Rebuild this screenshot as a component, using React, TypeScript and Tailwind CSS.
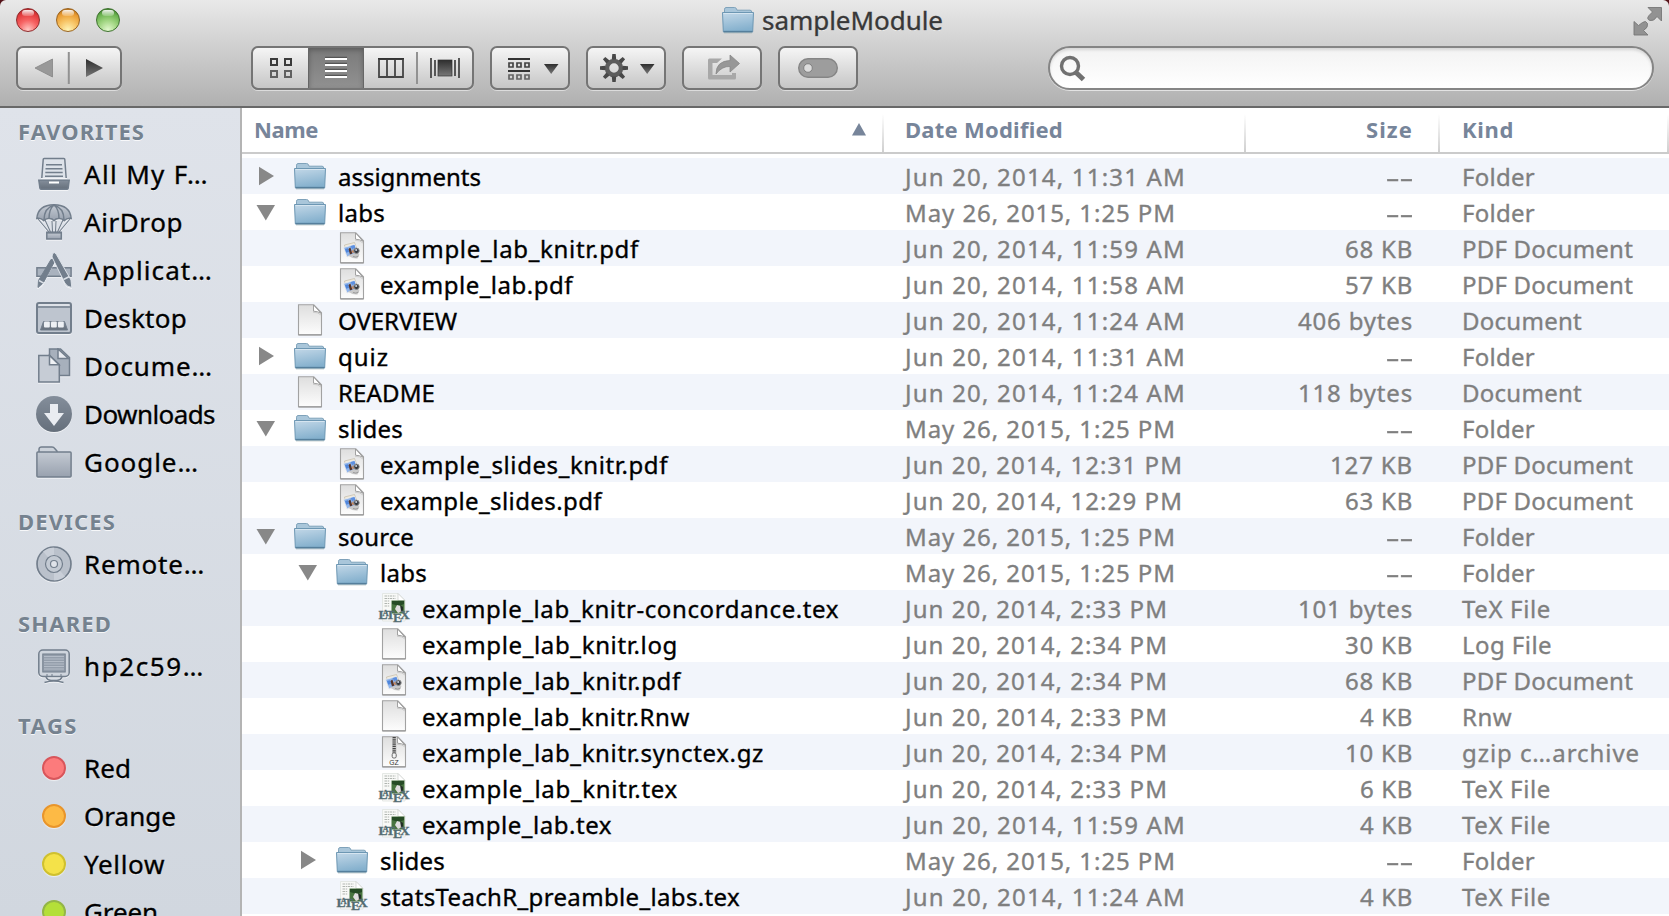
import { useLayoutEffect, useRef, useState } from "react";
import type { ReactNode } from "react";

/* Text whose letter spacing is adjusted so that it spans `w` pixels. */
function Fit({ text, w, className = "" }: { text: string; w: number; className?: string }) {
  const ref = useRef<HTMLSpanElement>(null);
  const [spacing, setSpacing] = useState(0);
  useLayoutEffect(() => {
    const el = ref.current;
    if (!el) return;
    el.style.letterSpacing = "0px";
    const natural = el.getBoundingClientRect().width;
    setSpacing((w - natural) / text.length);
  }, [text, w]);
  return (
    <span ref={ref} className={`inline-block shrink-0 whitespace-nowrap ${className}`} style={{ letterSpacing: `${spacing}px` }}>
      {text}
    </span>
  );
}

type Kind = "folder" | "doc" | "pdf" | "gz" | "tex";
type Row = { name: string; w: number; depth: 0 | 1 | 2; icon: Kind; open?: boolean; date: string; dw: number; size: string; sw: number; kind: string; kw: number };

const AM = 281;
const PM = 263;
const MAY = 271;
const MAY_DATE = "May 26, 2015, 1:25 PM";

const folder = (name: string, w: number, depth: 0 | 1, open: boolean, date = MAY_DATE, dw = MAY): Row => ({
  name, w, depth, icon: "folder", open, date, dw, size: "--", sw: 27, kind: "Folder", kw: 73,
});
const pdf = (name: string, w: number, depth: 1 | 2, time: string, dw: number, size: string, sw: number): Row => ({
  name, w, depth, icon: "pdf", date: `Jun 20, 2014, ${time}`, dw, size, sw, kind: "PDF Document", kw: 171,
});
const file = (name: string, w: number, depth: 0 | 1 | 2, icon: Kind, time: string, dw: number, size: string, sw: number, kind: string, kw: number): Row => ({
  name, w, depth, icon, date: `Jun 20, 2014, ${time}`, dw, size, sw, kind, kw,
});

const rows: Row[] = [
  folder("assignments", 143, 0, false, "Jun 20, 2014, 11:31 AM", AM),
  folder("labs", 47, 0, true),
  pdf("example_lab_knitr.pdf", 259, 1, "11:59 AM", AM, "68 KB", 68),
  pdf("example_lab.pdf", 193, 1, "11:58 AM", AM, "57 KB", 68),
  file("OVERVIEW", 119, 0, "doc", "11:24 AM", AM, "406 bytes", 115, "Document", 120),
  folder("quiz", 51, 0, false, "Jun 20, 2014, 11:31 AM", AM),
  file("README", 97, 0, "doc", "11:24 AM", AM, "118 bytes", 115, "Document", 120),
  folder("slides", 65, 0, true),
  pdf("example_slides_knitr.pdf", 288, 1, "12:31 PM", 278, "127 KB", 83),
  pdf("example_slides.pdf", 222, 1, "12:29 PM", 278, "63 KB", 68),
  folder("source", 76, 0, true),
  folder("labs", 47, 1, true),
  file("example_lab_knitr-concordance.tex", 417, 2, "tex", "2:33 PM", PM, "101 bytes", 115, "TeX File", 89),
  file("example_lab_knitr.log", 256, 2, "doc", "2:34 PM", PM, "30 KB", 68, "Log File", 90),
  pdf("example_lab_knitr.pdf", 259, 2, "2:34 PM", PM, "68 KB", 68),
  file("example_lab_knitr.Rnw", 268, 2, "doc", "2:33 PM", PM, "4 KB", 53, "Rnw", 50),
  file("example_lab_knitr.synctex.gz", 342, 2, "gz", "2:34 PM", PM, "10 KB", 68, "gzip c…archive", 178),
  file("example_lab_knitr.tex", 256, 2, "tex", "2:33 PM", PM, "6 KB", 53, "TeX File", 89),
  file("example_lab.tex", 190, 2, "tex", "11:59 AM", AM, "4 KB", 53, "TeX File", 89),
  folder("slides", 65, 1, false),
  file("statsTeachR_preamble_labs.tex", 360, 1, "tex", "11:24 AM", AM, "4 KB", 53, "TeX File", 89),
];

function Defs() {
  return (
    <svg width="0" height="0" className="absolute">
      <defs>
        <linearGradient id="fold" x1="0" y1="0" x2="0.25" y2="1"><stop offset="0" stopColor="#c3d8e8" /><stop offset="1" stopColor="#84b0cd" /></linearGradient>
        <linearGradient id="page" x1="0" y1="0" x2="0" y2="1"><stop offset="0" stopColor="#dedede" /><stop offset="1" stopColor="#fdfdfd" /></linearGradient>
        <linearGradient id="dark" x1="0" y1="0" x2="0" y2="1"><stop offset="0" stopColor="#2e2e2e" /><stop offset="1" stopColor="#777" /></linearGradient>
        <linearGradient id="side" x1="0" y1="0" x2="0" y2="1"><stop offset="0" stopColor="#c4cad3" /><stop offset="1" stopColor="#98a1ae" /></linearGradient>
        <linearGradient id="sideDark" x1="0" y1="0" x2="0" y2="1"><stop offset="0" stopColor="#848e9b" /><stop offset="1" stopColor="#656f7b" /></linearGradient>
      </defs>
    </svg>
  );
}

function FolderIcon() {
  return (
    <svg width="32" height="32" viewBox="0 0 32 32" className="shrink-0">
      <path d="M2.5 9V5.2Q2.5 3.8 4 3.5h8.5q1.5 0 2 1.4l.5 1.3h13q1.7 0 1.7 1.8v2z" fill="#a9c6da" stroke="#7fa2ba" />
      <path d="M.5 8.5h31l-.8 19q0 .5-.6.5H2q-.7 0-.7-.6z" fill="url(#fold)" stroke="#6d97b3" />
      <path d="M1.5 9.5h29" stroke="#d6e5f0" />
      <path d="M1.5 27.6h29" stroke="#557f9c" strokeWidth="1.5" />
      <path d="M2 29h28" stroke="#9aa" strokeOpacity=".5" />
    </svg>
  );
}

function Page({ children }: { children?: ReactNode }) {
  return (
    <svg width="32" height="32" viewBox="0 0 32 32" className="shrink-0">
      <path d="M4.5.8h15.3l7.7 7.900v22.100h-23z" fill="url(#page)" stroke="#a2a2a2" strokeWidth="1.100" />
      <path d="M4.5 31h23" stroke="#8d8d8d" />
      {children}
      <path d="M19.500 1v6.200q4.500 .2 7.500 2z" fill="#fff" stroke="#999" strokeWidth=".9" />
      <path d="M19 8.200q5 0 8 2.800" stroke="#bbb" strokeOpacity=".6" fill="none" />
    </svg>
  );
}

function RowIcon({ kind }: { kind: Kind }) {
  if (kind === "folder") return <FolderIcon />;
  if (kind === "doc") return <Page />;
  if (kind === "pdf")
    return (
      <Page>
        <path d="M8.500 13l10-2.500 3 8-11.500 3z" fill="#efeadd" stroke="#c4bba9" strokeWidth=".7" />
        <path d="M7.500 15.500l11-3 3.500 8.500-11 4z" fill="#8fb4ea" stroke="#eee" strokeWidth=".8" />
        <path d="M9 17l3-.8 1 3.500-2.700 1z" fill="#4f86dc" />
        <path d="M14.500 14l4-1 1 3-3.500 1z" fill="#5d8fe0" />
        <path d="M12.500 17l1.800-1.500 2.200 6-2.500 1z" fill="#53342b" />
        <path d="M15.500 20l1.500-3 1.500 4.500z" fill="#d08a5c" />
        <path d="M12 23.500l9-3 2.500 1.500-2 4.500q-5 .5-9.500-3z" fill="#c9c9c9" />
        <circle cx="20.500" cy="18.800" r="2.700" fill="#33373f" stroke="#8d8d8d" />
        <circle cx="20.200" cy="18" r="1.100" fill="#c7d0df" />
        <path d="M17 24.500q3 1.500 5.500-.5" stroke="#999" fill="none" />
      </Page>
    );
  if (kind === "gz")
    return (
      <Page>
        <rect x="14" y="1" width="4.500" height="16" fill="#c9c9c9" />
        <path d="M16.200 1v16" stroke="#444" strokeWidth="3.200" strokeDasharray="1.200 1" />
        <rect x="14.200" y="17" width="4" height="5" rx="1.500" fill="#f3f3f3" stroke="#666" />
        <text x="16" y="29.300" textAnchor="middle" fontSize="6.800" fontFamily="Liberation Sans, sans-serif" fill="#333">GZ</text>
      </Page>
    );
  return (
    <svg width="32" height="32" viewBox="0 0 32 32" className="shrink-0 overflow-visible">
      <path d="M4.500 1.500H20l7 7V29h-22.500z" fill="#f8f9f7" stroke="#e0e3e0" strokeWidth=".8" />
      <path d="M20 1.500V8.500h7z" fill="#fff" stroke="#c8ccc8" strokeWidth=".7" />
      <path d="M6.500 4h11M6.500 6.500h11M6.500 9h5M6.500 11.500h5M6.500 14h5" stroke="#b0b5b0" strokeWidth="1" strokeDasharray="2.500 .7 1.500 .6" />
      <rect x="13.500" y="8.500" width="13" height="13" fill="#48743f" />
      <path d="M14 9h12v3l-5 2-7-2z" fill="#264b25" />
      <path d="M17 17l2-4 4 1 2 5-5 2z" fill="#e1dee0" />
      <path d="M22 13l3 2v5l-2-1z" fill="#222f26" />
      <text fontFamily="Liberation Serif, serif" fontWeight="bold" fontSize="13.500" fill="#536c72" stroke="#536c72" strokeWidth=".3">
        <tspan x="0.500" y="27">L</tspan>
        <tspan x="4.500" y="23.500" fontSize="8.500">A</tspan>
        <tspan x="8" y="27">T</tspan>
        <tspan x="15" y="29.500">E</tspan>
        <tspan x="22" y="27">X</tspan>
      </text>
    </svg>
  );
}

const indent = ["pl-[13px]", "pl-[55px]", "pl-[97px]"];

function FileRow({ r, i }: { r: Row; i: number }) {
  return (
    <div className={`flex h-9 shrink-0 items-center ${i % 2 ? "bg-white" : "bg-[#f2f5fb]"}`}>
      <div className={`flex w-[663px] shrink-0 items-center ${indent[r.depth]}`}>
        <div className="flex w-[39px] shrink-0 items-center">
          {r.icon === "folder" &&
            (r.open ? (
              <svg width="20" height="20" className="shrink-0"><path d="M1.500 3h18.500l-9.200 15.500z" fill="#888" /></svg>
            ) : (
              <svg width="20" height="20" className="shrink-0"><path d="M4 .8v18.500L19 10z" fill="#888" /></svg>
            ))}
        </div>
        <RowIcon kind={r.icon} />
        <Fit text={r.name} w={r.w} className="ml-3 pt-px text-black" />
      </div>
      <Fit text={r.date} w={r.dw} className="pt-px text-[#7f7f7f]" />
      <div className="ml-auto flex w-[226px] shrink-0 justify-end pt-px text-[#7f7f7f]">
        {r.size === "--" ? <span className="origin-right scale-x-[1.8]">--</span> : <Fit text={r.size} w={r.sw} />}
      </div>
      <div className="ml-12 w-[208px] shrink-0 pt-px pl-px text-[#7f7f7f]">
        <Fit text={r.kind} w={r.kw} />
      </div>
    </div>
  );
}

const S = "#727e8c";

function SideSvg({ children }: { children: ReactNode }) {
  return (
    <svg width="36" height="36" viewBox="0 0 36 36" className="shrink-0 drop-shadow-[0_1px_0_rgba(255,255,255,0.6)]" fill="none" stroke={S} strokeWidth="1.500">
      {children}
    </svg>
  );
}

const icons: Record<string, ReactNode> = {
  files: (
    <SideSvg>
      <path d="M5.800 22L7.200 3.500q0-.9 1-.9h19.600q1 0 1 .9L30.200 22" fill="#dde2e9" />
      <path d="M10 8.800h16M9.500 12.800h17M9.300 16.500h17.400M9 20.300h18" />
      <path d="M2.800 24.200h30.400l-1 8q-.1 1-1 1H5q-1 0-1.100-1z" fill="url(#sideDark)" />
      <path d="M13 26.500h10" stroke="#fff" strokeWidth="2" />
    </SideSvg>
  ),
  airdrop: (
    <SideSvg>
      <path d="M2 15L13 28M9 16l5.500 12M27 16l-5.500 12M34 15L23 28M16 17l.5 11M20 17l-.5 11" strokeWidth="1.100" />
      <path d="M.8 14.500Q2 1 18 .8q16 .2 17.200 13.700-4-.8-7 2.200-2.200-2.600-5.200-2.200-3-.2-5 2.200-2-2.400-5-2.200-3-.4-5.200 2.200-3-3-7-2.200z" fill="url(#side)" />
      <path d="M8 16Q8 4 18 1Q28 4 28 16M13 14.500Q13 5 18 1Q23 5 23 14.500" />
      <rect x="10.800" y="28.500" width="14.500" height="6.500" fill="url(#side)" />
      <path d="M10.500 28.500h15" strokeWidth="2" />
    </SideSvg>
  ),
  apps: (
    <SideSvg>
      <rect x=".9" y="15.800" width="34.200" height="8.500" fill="#a9b2be" />
      <path d="M18 0l4 5-16 29-5 2 1-6L15 7z" fill="#dce1e8" stroke="none" />
      <path d="M15 7.500q2-1 3.500 2L7.500 30.500l-5.500 5 .5-7z" fill={S} strokeWidth="1" />
      <path d="M3 28.500l5 2.800" stroke="#dce1e8" />
      <path d="M16.500 1.500q2.200-2 3.800.8L35 28l.8 7.500q-5-.5-7-4.500L16 5z" fill={S} stroke="#dce1e8" strokeWidth="1" />
      <path d="M27.500 27.500l6-3" stroke="#dce1e8" />
    </SideSvg>
  ),
  desktop: (
    <SideSvg>
      <rect x="1" y="3" width="34" height="30" rx="2" fill="#bec5cf" strokeWidth="2" />
      <path d="M2 7h32" /><path d="M2.500 5h31" stroke="#e8ebf0" />
      <path d="M7.500 21.500h21l3 8.500H4.500z" fill="url(#sideDark)" strokeWidth="1" />
      <g fill="#edf0f4" stroke="none"><rect x="8" y="21.500" width="5.800" height="6" rx="1" /><rect x="15" y="21.500" width="5.800" height="6" rx="1" /><rect x="22" y="21.500" width="5.800" height="6" rx="1" /></g>
    </SideSvg>
  ),
  docs: (
    <SideSvg>
      <path d="M13.500 1h11l9 8.500V27.500H13.500z" fill="#a7b0bc" />
      <path d="M22 1v9.500h10.500z" fill="#e8ebf0" />
      <path d="M2.800 7.500h11l9.500 9V34H2.800z" fill="#c6ccd5" />
      <path d="M13.500 7.500v9.300h9.500z" fill="#f0f2f5" />
    </SideSvg>
  ),
  downloads: (
    <SideSvg>
      <circle cx="18" cy="18" r="18" fill="url(#sideDark)" stroke="none" />
      <path d="M14 8h8v9h6l-10 13L8 17h6z" fill="#e9ecf1" stroke="none" />
    </SideSvg>
  ),
  folder: (
    <SideSvg>
      <path d="M3 8V5q.3-2 2.500-2h10.500q1.800 0 3 1.800l2.500 3" fill="#ccd2da" />
      <rect x=".9" y="8" width="34.200" height="25" rx="1" fill="url(#side)" />
    </SideSvg>
  ),
  disc: (
    <SideSvg>
      <circle cx="18" cy="18" r="17" fill="#bac1cb" strokeWidth="1.700" />
      <path d="M18 18L7 5.500Q13 1 18 1.800zM18 18l11 12.500Q23 35 18 34.200z" fill="#c9cfd8" stroke="none" />
      <circle cx="18" cy="18" r="8.500" fill="#c3cad3" strokeWidth="1.200" />
      <circle cx="18" cy="18" r="3.500" fill="#dfe3e9" strokeWidth="1.200" />
    </SideSvg>
  ),
  display: (
    <SideSvg>
      <rect x="2.800" y="2" width="30.400" height="26.500" rx="4" fill="#cfd5dd" />
      <rect x="6.800" y="6" width="22.400" height="18" fill="#949eab" strokeWidth="1" />
      <path d="M8 8.500h20M8 11h20M8 13.500h20M8 16h20M8 18.500h20M8 21h20" stroke="#b4bcc7" strokeWidth="1" />
      <path d="M11 26v2M16 26v2M25 26v2" strokeWidth="1" />
      <path d="M10 29q1 3 5 3.500h6q4-.5 5-3.500M8.500 34.500q9-3 19 0" />
    </SideSvg>
  ),
};

function Heading({ text, w, first }: { text: string; w: number; first?: boolean }) {
  return (
    <div className={`flex shrink-0 items-end pl-[18px] pb-[3px] text-[22px] leading-[32px] font-bold text-[#75828f] [text-shadow:0_1px_0_rgba(255,255,255,0.8)] ${first ? "h-[42px]" : "h-[54px]"}`}>
      <Fit text={text} w={w} />
    </div>
  );
}

function Item({ icon, text, w }: { icon: ReactNode; text: string; w: number }) {
  return (
    <div className="flex h-12 shrink-0 items-center pl-9 text-[26px] leading-[48px] text-black [-webkit-text-stroke:0.35px_currentColor] [text-shadow:0_1px_0_rgba(255,255,255,0.8)]">
      {icon}
      <Fit text={text} w={w} className="ml-3" />
    </div>
  );
}

function Tag({ tone }: { tone: string }) {
  return (
    <div className="flex w-9 shrink-0 justify-center">
      <div className={`size-6 rounded-full border-2 shadow-[0_1px_1px_rgba(255,255,255,0.6)] ${tone}`} />
    </div>
  );
}

function Light({ tone }: { tone: string }) {
  return (
    <div className={`relative size-6 overflow-hidden rounded-full border ${tone}`}>
      <div className="absolute top-px left-[5px] h-[6px] w-3 rounded-full bg-linear-to-b from-white/90 to-white/20" />
    </div>
  );
}

const btn =
  "flex h-11 shrink-0 items-center overflow-hidden rounded-[7px] border-2 border-[#757575] bg-linear-to-b from-[#f5f5f5] to-[#c6c6c6] shadow-[0_1px_0_rgba(255,255,255,0.5)]";

function Toolbar() {
  return (
    <div className="flex h-11 items-center pr-[15px] pl-4">
      <div className={`${btn} w-[106px]`}>
        <svg width="102" height="40">
          <path d="M34.500 11v18L17 20z" fill="#999" stroke="#858585" strokeWidth=".8" />
          <path d="M50.800 4v32" stroke="#929292" strokeWidth="2" />
          <path d="M68 11v18l17-9z" fill="url(#dark)" />
        </svg>
      </div>
      <div className={`${btn} ml-[129px] w-[223px]`}>
        <div className="flex h-10 w-[55px] shrink-0 items-center justify-center">
          <svg width="24" height="22" fill="none" strokeWidth="2">
            <rect x="2" y="2" width="6" height="6" stroke="#3b3b3b" /><rect x="16" y="2" width="6" height="6" stroke="#3b3b3b" />
            <rect x="2" y="14" width="6" height="6" stroke="#616161" /><rect x="16" y="14" width="6" height="6" stroke="#616161" />
          </svg>
        </div>
        <div className="flex h-10 w-14 shrink-0 items-center justify-center border-x border-[#666] bg-linear-to-b from-[#7a7a7a] to-[#919191] shadow-[inset_0_2px_5px_rgba(0,0,0,0.25)]">
          <svg width="24" height="24">
            <path d="M1 3.500h22M1 9.500h22M1 15.500h22M1 21.500h22" stroke="#555" strokeWidth="1.500" transform="translate(0,-2)" />
            <path d="M1 3h22M1 9h22M1 15h22M1 21h22" stroke="#fff" strokeWidth="2" />
          </svg>
        </div>
        <svg width="108" height="40" className="shrink-0">
          <path d="M15 11h24v18H15zM23 11v18M31 11v18" fill="none" stroke="#444" strokeWidth="1.800" />
          <path d="M14 10.800h26" stroke="#333" strokeWidth="1.500" />
          <path d="M53 4v32" stroke="#929292" strokeWidth="2" />
          <path d="M67 10v20M71 12v16M91 12v16M95 10v20" stroke="#484848" strokeWidth="1.800" />
          <rect x="74" y="12" width="14" height="16" fill="url(#dark)" stroke="#333" strokeWidth=".7" />
        </svg>
      </div>
      <div className={`${btn} ml-4 w-20`}>
        <svg width="76" height="40">
          <path d="M16 11h22M16 23h22" stroke="#333" strokeWidth="2" />
          <g fill="none" strokeWidth="1.700">
            <path d="M17 15h4v4h-4zM25 15h4v4h-4zM33 15h4v4h-4z" stroke="#444" />
            <path d="M17 27h4v4h-4zM25 27h4v4h-4zM33 27h4v4h-4z" stroke="#646464" />
          </g>
          <path d="M52 16h14.500L59.200 26z" fill="url(#dark)" />
        </svg>
      </div>
      <div className={`${btn} ml-4 w-20`}>
        <svg width="76" height="40">
          <g transform="translate(26,20)">
            <circle r="7" fill="none" stroke="#5c5c5c" strokeWidth="4.500" />
            <g fill="#484848">
              {[0, 45, 90, 135, 180, 225, 270, 315].map((a) => (
                <path key={a} d="M-2.200-8.500L-1.700-14h3.400L2.200-8.500z" transform={`rotate(${a})`} />
              ))}
            </g>
          </g>
          <path d="M52 16h14.500L59.200 26z" fill="url(#dark)" />
        </svg>
      </div>
      <div className={`${btn} ml-4 w-20`}>
        <svg width="76" height="40">
          <path d="M38 10.500H25.500q-1.500 0-1.500 1.500v18q0 1.500 1.500 1.500h25q1.500 0 1.500-1.500V25h-4v2H28.500V15H33z" fill="#a8a8a8" />
          <path d="M32 26Q32 13 46 12.500V7l9.500 8.500-9.500 8.500v-5.500q-8-.5-14 7.500z" fill="#979797" stroke="#888" strokeWidth=".8" />
        </svg>
      </div>
      <div className={`${btn} ml-4 w-20`}>
        <svg width="76" height="40">
          <rect x="18.700" y="10.700" width="38.600" height="18.600" rx="9.300" fill="#9d9d9d" stroke="#858585" strokeWidth="1.400" />
          <circle cx="28" cy="20" r="4.300" fill="#dcdcdc" stroke="#808080" />
        </svg>
      </div>
      <div className="ml-auto flex h-11 w-[606px] items-center rounded-full border-2 border-[#858585] bg-linear-to-b from-[#f3f3f3] to-white pl-[9px] shadow-[inset_0_2px_3px_rgba(0,0,0,0.12),0_1px_0_rgba(255,255,255,0.6)]">
        <svg width="28" height="28" fill="none" stroke="#707070" className="shrink-0">
          <circle cx="11" cy="12" r="8.500" strokeWidth="3.400" />
          <path d="M17 18.500l7.500 7" strokeWidth="5" />
        </svg>
      </div>
    </div>
  );
}

function Divider() {
  return <div className="h-[38px] w-0.5 shrink-0 self-end bg-linear-to-b from-white to-[#cfcfcf]" />;
}

export default function App() {
  return (
    <div className="flex h-[916px] w-[1669px] flex-col overflow-hidden bg-[#541218] font-['Noto_Sans',sans-serif]">
      <Defs />
      <header className="flex h-[108px] shrink-0 flex-col rounded-t-[6px] border-b-2 border-[#686868] bg-linear-to-b from-[#e9e9e9] to-[#b0b0b0]">
        <div className="relative flex h-[46px] shrink-0 items-start px-4">
          <div className="flex gap-4 pt-2">
            <Light tone="border-[#8e2c2e] bg-[radial-gradient(circle_at_50%_95%,#ffc9c5_0%,#f76464_40%,#e23b3d_70%,#a11f22_100%)]" />
            <Light tone="border-[#9a6421] bg-[radial-gradient(circle_at_50%_95%,#fff5b8_0%,#f7c364_40%,#e99b32_70%,#9b5a12_100%)]" />
            <Light tone="border-[#3f7230] bg-[radial-gradient(circle_at_50%_95%,#e3f9cf_0%,#a0d581_40%,#6bb350_70%,#2d6620_100%)]" />
          </div>
          <div className="ml-[602px] flex items-center pt-1">
            <FolderIcon />
            <Fit text="sampleModule" w={181} className="ml-2 text-[26px] leading-[32px] text-[#383838] [-webkit-text-stroke:0.35px_currentColor] [text-shadow:0_1px_0_rgba(255,255,255,0.6)]" />
          </div>
          <svg width="30" height="30" viewBox="0 0 30 30" className="absolute top-1.5 right-[6px]">
            <g fill="#929292" stroke="#777" strokeWidth=".9">
              <path d="M15 1.500h13.500V15l-4.500-4.500q-3 5-7 4-4-1.500-1-5l3.500-3.500z" />
              <path d="M1 15.500v13.500h14L10.500 24.500q5-3 4-7-1.500-3.500-5-1l-4 3z" />
            </g>
          </svg>
        </div>
        <Toolbar />
      </header>
      <div className="flex h-[808px] shrink-0">
        <aside className="flex w-60 shrink-0 flex-col overflow-hidden bg-linear-to-b from-[#dfe3ea] to-[#d1d7df]">
          <Heading text="FAVORITES" w={127} first />
          <Item icon={icons.files} text="All My F…" w={125} />
          <Item icon={icons.airdrop} text="AirDrop" w={99} />
          <Item icon={icons.apps} text="Applicat…" w={129} />
          <Item icon={icons.desktop} text="Desktop" w={103} />
          <Item icon={icons.docs} text="Docume…" w={129} />
          <Item icon={icons.downloads} text="Downloads" w={131} />
          <Item icon={icons.folder} text="Google…" w={115} />
          <Heading text="DEVICES" w={98} />
          <Item icon={icons.disc} text="Remote…" w={121} />
          <Heading text="SHARED" w={94} />
          <Item icon={icons.display} text="hp2c59…" w={121} />
          <Heading text="TAGS" w={60} />
          <Item icon={<Tag tone="border-[#d8565b] bg-[#fc7b7c]" />} text="Red" w={47} />
          <Item icon={<Tag tone="border-[#e8952c] bg-[#fdba45]" />} text="Orange" w={92} />
          <Item icon={<Tag tone="border-[#cfc02f] bg-[#f4e249]" />} text="Yellow" w={81} />
          <Item icon={<Tag tone="border-[#93b548] bg-[#b4df39]" />} text="Green" w={74} />
        </aside>
        <div className="w-0.5 shrink-0 bg-[#b4b4b4]" />
        <main className="flex w-[1427px] shrink-0 flex-col overflow-hidden bg-white text-[24px] leading-[35px] [-webkit-text-stroke:0.35px_currentColor]">
          <div className="flex h-[46px] shrink-0 items-center border-b-2 border-[#cbcbcb] text-[22px] leading-[42px] font-bold text-[#77859a] [-webkit-text-stroke:0]">
            <div className="flex w-[640px] shrink-0 items-center pb-0.5 pl-3">
              <Fit text="Name" w={64} />
              <svg width="16" height="14" className="mr-[15px] ml-auto"><path d="M1 13.500L8 1l7 12.500z" fill="#77859a" /></svg>
            </div>
            <Divider />
            <div className="w-[360px] shrink-0 pb-0.5 pl-[21px]"><Fit text="Date Modified" w={158} /></div>
            <Divider />
            <div className="flex w-[192px] shrink-0 justify-end pr-[25px] pb-0.5"><Fit text="Size" w={47} /></div>
            <Divider />
            <div className="w-[227px] shrink-0 pb-0.5 pl-[22px]"><Fit text="Kind" w={52} /></div>
            <Divider />
          </div>
          <div className="h-1 shrink-0" />
          {rows.map((r, i) => (
            <FileRow key={i} r={r} i={i} />
          ))}
        </main>
      </div>
    </div>
  );
}
